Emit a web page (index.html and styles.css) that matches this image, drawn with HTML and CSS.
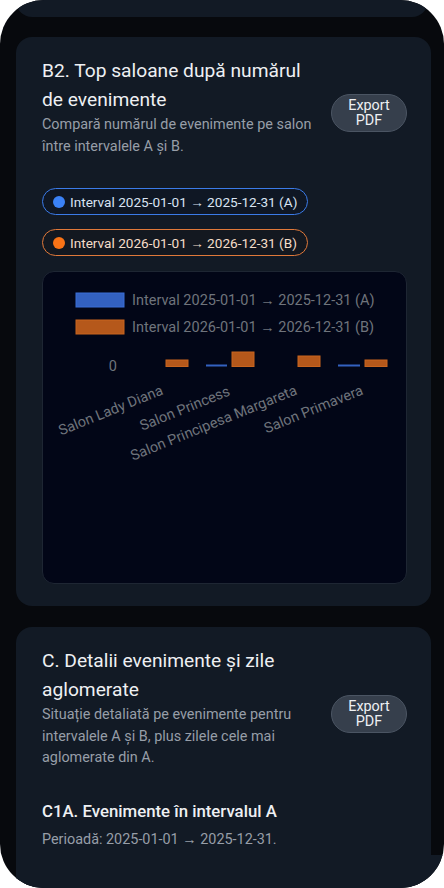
FILE: index.html
```html
<!DOCTYPE html>
<html lang="ro">
<head>
<meta charset="utf-8">
<title>Rapoarte</title>
<link rel="stylesheet" href="styles.css">
</head>
<body>
<div class="phone">
  <div class="screen">
    <div class="card card-top"></div>

    <section class="card">
      <div class="card-head">
        <div class="head-text">
          <h2 class="title">B2. Top saloane după numărul de evenimente</h2>
          <p class="subtitle">Compară numărul de evenimente pe salon între intervalele A și B.</p>
        </div>
        <button class="btn-export">Export<br>PDF</button>
      </div>

      <div class="pills">
        <span class="pill pill-a"><span class="dot"></span>Interval 2025-01-01 → 2025-12-31 (A)</span>
        <span class="pill pill-b"><span class="dot"></span>Interval 2026-01-01 → 2026-12-31 (B)</span>
      </div>

      <div class="chart">
        <svg class="chart-svg" width="364" height="313" viewBox="0 0 364 313">
          <rect x="34" y="22" width="48" height="14" fill="#3361c0" stroke="#3b6fd6" stroke-width="1"/>
          <text class="legend" x="90" y="34">Interval 2025-01-01 → 2025-12-31 (A)</text>
          <rect x="34" y="49" width="48" height="14" fill="#b5581b" stroke="#c9651f" stroke-width="1"/>
          <text class="legend" x="90" y="61">Interval 2026-01-01 → 2026-12-31 (B)</text>

          <text class="axis" x="75" y="100" text-anchor="end">0</text>

          <rect x="124" y="89" width="22" height="6.5" fill="#b5581b" stroke="#c9651f" stroke-width="1"/>
          <rect x="164" y="93.5" width="21" height="2" fill="#3361c0"/>
          <rect x="190" y="81" width="22" height="14.5" fill="#b5581b" stroke="#c9651f" stroke-width="1"/>
          <rect x="256" y="85" width="22" height="10.5" fill="#b5581b" stroke="#c9651f" stroke-width="1"/>
          <rect x="296" y="93.5" width="22" height="2" fill="#3361c0"/>
          <rect x="323" y="89" width="22" height="6.5" fill="#b5581b" stroke="#c9651f" stroke-width="1"/>

          <text class="axis" text-anchor="end" transform="translate(122 123) rotate(-22)">Salon Lady Diana</text>
          <text class="axis" text-anchor="end" transform="translate(189 124) rotate(-22)">Salon Princess</text>
          <text class="axis" text-anchor="end" transform="translate(256 123) rotate(-22)">Salon Principesa Margareta</text>
          <text class="axis" text-anchor="end" transform="translate(322 123) rotate(-22)">Salon Primavera</text>
        </svg>
      </div>
    </section>

    <section class="card card-c">
      <div class="card-head">
        <div class="head-text">
          <h2 class="title">C. Detalii evenimente și zile aglomerate</h2>
          <p class="subtitle">Situație detaliată pe evenimente pentru intervalele A și B, plus zilele cele mai aglomerate din A.</p>
        </div>
        <button class="btn-export">Export<br>PDF</button>
      </div>

      <h3 class="subhead">C1A. Evenimente în intervalul A</h3>
      <p class="period">Perioadă: 2025-01-01 → 2025-12-31.</p>
    </section>
  </div>
  <div class="bottom-bar"></div>
</div>
</body>
</html>
```

FILE: styles.css
```css
* { box-sizing: border-box; }

html, body {
  margin: 0;
  padding: 0;
  background: #ffffff;
}

body {
  font-family: Roboto, "Noto Sans", "Liberation Sans", sans-serif;
  color: #eef0f3;
}

.phone {
  position: relative;
  width: 444px;
  height: 888px;
  border-radius: 44px;
  overflow: hidden;
  background: #07090d;
}

.screen {
  display: flex;
  flex-direction: column;
  gap: 20px;
  padding: 0 13px 0 16px;
}

.card {
  background: #121a25;
  border-radius: 16px;
  padding: 20px 24px 22px 26px;
}

.card-top {
  height: 17px;
  padding: 0;
  border-radius: 0 0 16px 16px;
  margin-right: 3px;
}

.card-c {
  margin-top: 1px;
  min-height: 300px;
}

.card-head {
  display: flex;
  align-items: center;
  gap: 10px;
}

.head-text {
  flex: 1;
  min-width: 0;
}

.title {
  margin: 0;
  font-size: 19.2px;
  font-weight: 400;
  line-height: 28.6px;
  color: #eef0f3;
}

.subtitle {
  margin: 0;
  font-size: 14.4px;
  line-height: 21.5px;
  color: #979ea8;
}

.btn-export {
  flex: none;
  margin-top: 12px;
  width: 76px;
  height: 38px;
  border-radius: 19px;
  border: 1px solid #4b5563;
  background: #363f4c;
  color: #eef0f3;
  font-family: inherit;
  font-size: 14.4px;
  line-height: 15.5px;
  padding: 0;
  text-align: center;
}

.pills {
  display: flex;
  flex-direction: column;
  align-items: flex-start;
  gap: 14px;
  margin-top: 31px;
}

.pill {
  display: inline-flex;
  align-items: center;
  gap: 5px;
  height: 27px;
  padding: 0 10px 0 10px;
  border-radius: 14px;
  font-size: 13.6px;
  white-space: nowrap;
}

.pill .dot {
  width: 12px;
  height: 12px;
  border-radius: 50%;
  flex: none;
}

.pill-a {
  border: 1.5px solid #3b7be8;
  color: #d9e3f2;
  background: #0f1724;
}
.pill-a .dot { background: #3b82f6; }

.pill-b {
  border: 1.5px solid #e0793a;
  color: #f3ddc9;
  background: #131820;
}
.pill-b .dot { background: #f97316; }

.chart {
  margin-top: 15px;
  height: 313px;
  border-radius: 12px;
  border: 1px solid #1e2633;
  background: #020617;
  overflow: hidden;
}

.chart-svg {
  display: block;
  margin: -1px;
}

.legend {
  font-family: Roboto, "Noto Sans", sans-serif;
  font-size: 14.5px;
  fill: #6f747c;
}

.axis {
  font-family: Roboto, "Noto Sans", sans-serif;
  font-size: 14.5px;
  fill: #6f747c;
}

.subhead {
  margin: 30px 0 0;
  font-size: 16.8px;
  font-weight: 500;
  line-height: 24px;
  color: #eef0f3;
}

.period {
  margin: 6px 0 0;
  font-size: 14.4px;
  line-height: 21px;
  color: #979ea8;
}

.bottom-bar {
  position: absolute;
  left: 16px;
  right: 0;
  bottom: 0;
  height: 33px;
  background: #121a25;
}
```
